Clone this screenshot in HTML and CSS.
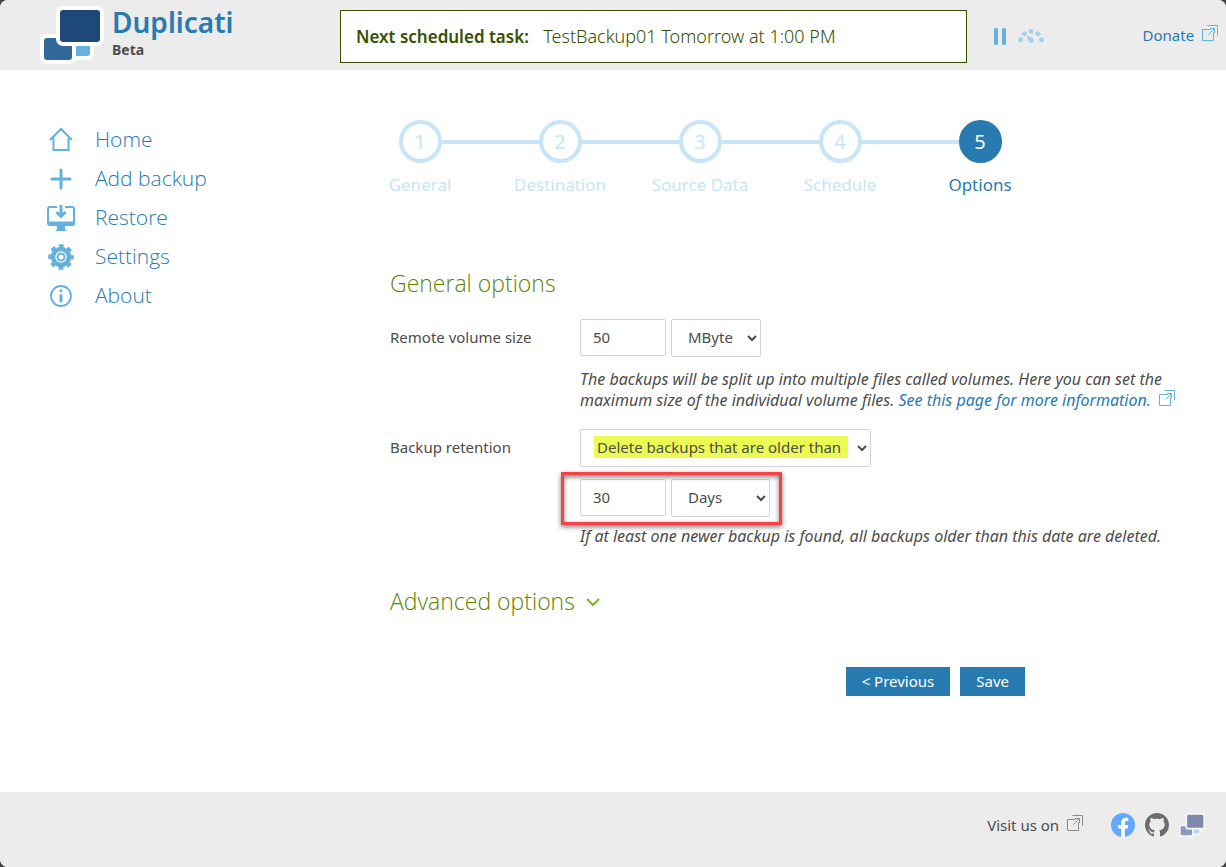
FILE: index.html
```html
<!DOCTYPE html>
<html lang="en">
<head>
    <meta charset="UTF-8">
    <meta name="viewport" content="width=device-width, initial-scale=1.0">
    <title>Duplicati</title>
    <link rel="stylesheet" href="styles.css">
</head>
<body>
    <svg class="symbols" width="0" height="0" aria-hidden="true">
        <symbol id="logo" viewBox="0 0 64 58">
            <rect x="30" y="32" width="22" height="20" rx="5" fill="#65b1de" stroke="#fff" stroke-width="4"/>
            <rect x="2" y="30" width="32" height="26" rx="5" fill="#33689b" stroke="#fff" stroke-width="4"/>
            <rect x="18" y="2" width="44" height="36" rx="5" fill="#1e4878" stroke="#fff" stroke-width="4"/>
        </symbol>
        <symbol id="external" viewBox="0 0 16 16">
            <path d="M8.5 4.5h-8v11h11v-8M5.5 .5h10v10M6.500 9.500l6-6M8 3.500h4.500V8" fill="none" stroke="currentColor"/>
        </symbol>
    </svg>

    <header class="header">
        <a href="#" class="brand">
            <svg class="logo"><use href="#logo"/></svg>
            <span class="brand-text">
                <span class="brand-name">Duplicati</span>
                <span class="brand-tag">Beta</span>
            </span>
        </a>
        <div class="task"><strong>Next scheduled task:</strong> <span>TestBackup01 Tomorrow at 1:00 PM</span></div>
        <div class="header-right">
            <button class="icon-button" aria-label="Pause">
                <svg width="12" height="18" viewBox="0 0 12 18" fill="#65b1de"><rect y="1" width="4" height="17" rx="1.500"/><rect x="8" y="1" width="4" height="17" rx="1.500"/></svg>
            </button>
            <button class="icon-button" aria-label="Throttle">
                <svg width="26" height="16" viewBox="0 0 26 16">
                    <path d="M2.300 14A10.700 10.700 0 0 1 23.700 14" fill="none" stroke="#a5cee8" stroke-width="4" stroke-dasharray="4.500 2.780"/>
                    <path d="M8.500 7.500l6 2.500a2.700 2.700 0 1 1-4 3.200z" fill="#a5cee8"/>
                </svg>
            </button>
            <a href="#" class="donate">Donate <svg class="external"><use href="#external"/></svg></a>
        </div>
    </header>

    <div class="container">
        <nav class="menu">
            <a href="#">
                <svg viewBox="0 0 28 28"><path d="M3 14L14 3l11 11M6.500 12v12h15V12" fill="none" stroke="#65b1de" stroke-width="2"/></svg>
                Home
            </a>
            <a href="#">
                <svg viewBox="0 0 28 28"><path d="M14 5v18M5 14h18" stroke="#65b1de" stroke-width="3" stroke-linecap="round"/></svg>
                Add backup
            </a>
            <a href="#">
                <svg viewBox="0 0 28 28">
                    <path d="M10 3H3q-2 0-2 2v14q0 2 2 2h22q2 0 2-2V5q0-2-2-2h-7" fill="none" stroke="#65b1de" stroke-width="2"/>
                    <path d="M1 17.500h26V20q0 2-2 2H3q-2 0-2-2zM10 22h8v3l2 2H8l2-2z" fill="#65b1de"/>
                    <path d="M14 1v10M9.500 8l4.500 4.500L18.500 8" fill="none" stroke="#65b1de" stroke-width="3"/>
                </svg>
                Restore
            </a>
            <a href="#">
                <svg viewBox="0 0 28 28">
                    <circle cx="14" cy="14" r="8" fill="none" stroke="#65b1de" stroke-width="4.500"/>
                    <circle cx="14" cy="14" r="11" fill="none" stroke="#65b1de" stroke-width="3.500" stroke-dasharray="4.640 4" stroke-dashoffset="2.320"/>
                    <circle cx="14" cy="14" r="3.500" fill="none" stroke="#65b1de" stroke-width="2"/>
                </svg>
                Settings
            </a>
            <a href="#">
                <svg viewBox="0 0 28 28">
                    <circle cx="14" cy="14" r="10" fill="none" stroke="#65b1de" stroke-width="1.800"/>
                    <circle cx="14" cy="8.800" r="1.600" fill="#65b1de"/>
                    <path d="M14 13.500v5.500" stroke="#65b1de" stroke-width="3" stroke-linecap="round"/>
                </svg>
                About
            </a>
        </nav>

        <main class="content">
            <ol class="steps">
                <li><span class="step-row"><span class="step-circle">1</span></span>General</li>
                <li><span class="step-row"><span class="step-circle">2</span></span>Destination</li>
                <li><span class="step-row"><span class="step-circle">3</span></span>Source Data</li>
                <li><span class="step-row"><span class="step-circle">4</span></span>Schedule</li>
                <li class="active"><span class="step-row"><span class="step-circle">5</span></span>Options</li>
            </ol>

            <form class="options">
                <h2>General options</h2>

                <div class="form-row">
                    <label for="volumeSize">Remote volume size</label>
                    <div>
                        <div class="fields">
                            <input type="number" id="volumeSize" value="50">
                            <select class="unit" aria-label="Volume size unit">
                                <option>MByte</option>
                            </select>
                        </div>
                        <p class="hint">The backups will be split up into multiple files called volumes. Here you can set the maximum size of the individual volume files. <a href="#">See this page for more information. <svg class="external"><use href="#external"/></svg></a></p>
                    </div>
                </div>

                <div class="form-row">
                    <label for="retention">Backup retention</label>
                    <div>
                        <select id="retention" class="retention">
                            <option>Delete backups that are older than</option>
                        </select>
                        <div class="fields marked">
                            <input type="number" value="30" aria-label="Retention time">
                            <select class="period" aria-label="Retention unit">
                                <option>Days</option>
                            </select>
                        </div>
                        <p class="hint">If at least one newer backup is found, all backups older than this date are deleted.</p>
                    </div>
                </div>

                <h2 class="advanced">Advanced options
                    <svg width="16" height="10" viewBox="0 0 16 10"><path d="M2 2l6 6 6-6" fill="none" stroke="#7ab827" stroke-width="2.200"/></svg>
                </h2>

                <div class="buttons">
                    <button type="button">&lt; Previous</button>
                    <button type="submit">Save</button>
                </div>
            </form>
        </main>
    </div>

    <footer class="footer">
        <span class="visit">Visit us on <svg class="external"><use href="#external"/></svg></span>
        <a href="#" aria-label="Facebook">
            <svg width="24" height="24" viewBox="0 0 24 24">
                <circle cx="12" cy="12" r="12" fill="#62a8fb"/>
                <path d="M10.200 24v-8.500H7.200V12h3V9.400c0-3 1.800-4.700 4.500-4.700 1.300 0 2.600.2 2.600.2v3h-1.500c-1.500 0-1.900.9-1.900 1.800V12h3.300l-.5 3.500h-2.800V24z" fill="#fff"/>
            </svg>
        </a>
        <a href="#" aria-label="GitHub">
            <svg width="24" height="24" viewBox="0 0 16 16" fill="#6f6b6e">
                <path d="M8 0C3.580 0 0 3.580 0 8c0 3.540 2.290 6.530 5.470 7.590.4.070.55-.17.55-.38 0-.19-.01-.82-.01-1.490-2.010.37-2.530-.49-2.690-.94-.09-.23-.48-.94-.82-1.130-.28-.15-.68-.52-.01-.53.63-.01 1.080.58 1.230.82.72 1.210 1.870.87 2.330.66.07-.52.28-.87.51-1.070-1.780-.2-3.640-.89-3.640-3.950 0-.87.31-1.590.82-2.150-.08-.2-.36-1.020.08-2.120 0 0 .67-.21 2.200.82.64-.18 1.320-.27 2-.27s1.360.09 2 .27c1.530-1.040 2.200-.82 2.200-.82.44 1.100.16 1.920.08 2.120.51.56.82 1.270.82 2.150 0 3.070-1.870 3.750-3.650 3.950.29.25.54.73.54 1.480 0 1.070-.01 1.930-.01 2.200 0 .21.15.46.55.38A8.010 8.010 0 0 0 16 8c0-4.420-3.580-8-8-8z"/>
            </svg>
        </a>
        <a href="#" aria-label="Duplicati">
            <svg width="26" height="24" viewBox="0 0 64 58" opacity=".6">
                <rect x="30" y="32" width="22" height="20" rx="5" fill="#8cc8e8" stroke="#fff" stroke-width="4"/>
                <rect x="2" y="30" width="32" height="26" rx="5" fill="#4a62a0" stroke="#fff" stroke-width="4"/>
                <rect x="18" y="2" width="44" height="36" rx="5" fill="#384880" stroke="#fff" stroke-width="4"/>
            </svg>
        </a>
    </footer>
</body>
</html>
```
FILE: styles.css
```css
* {
    box-sizing: border-box;
}

html {
    background-color: #45433f;
}

body {
    display: flex;
    flex-direction: column;
    min-height: 100vh;
    margin: 0;
    font-family: "Noto Sans", sans-serif;
    font-size: 15px;
    line-height: 21px;
    color: #4c4c4c;
    background-color: #fff;
    border-radius: 8px;
    overflow: hidden;
}

a {
    color: #277bb1;
    text-decoration: none;
}

.symbols {
    position: absolute;
}

.external {
    width: 16px;
    height: 16px;
    margin-left: 4px;
    color: #65b1de;
}

/* header */
.header {
    display: flex;
    align-items: center;
    height: 70px;
    padding-left: 40px;
    background-color: #ececec;
}

.brand {
    display: flex;
    gap: 8px;
    width: 300px;
}

.logo {
    width: 64px;
    height: 58px;
}

.brand-text {
    display: flex;
    flex-direction: column;
}

.brand-name {
    font-size: 28px;
    font-weight: 600;
    line-height: 32px;
}

.brand-tag {
    font-size: 14px;
    font-weight: bold;
    line-height: 24px;
    color: #4c4c4c;
}

.task {
    flex: 1;
    margin-top: 3px;
    padding: 15px;
    font-size: 17px;
    border: 1px solid #365000;
    color: #365000;
    background-color: #fff;
}

.task strong {
    font-weight: 600;
}

.task span {
    margin-left: 10px;
    font-size: 18px;
    font-weight: 300;
}

.header-right {
    display: flex;
    align-items: center;
    gap: 12px;
    width: 259px;
    padding: 0 8px 0 27px;
}

.icon-button {
    display: flex;
    padding: 2px 0 0;
    border: none;
    background: none;
    cursor: pointer;
}

.donate {
    margin-left: auto;
}

/* menu and page */
.container {
    display: flex;
    flex: 1;
}

.menu {
    display: flex;
    flex-direction: column;
    flex-shrink: 0;
    width: 350px;
    padding: 50px 0 0 47px;
}

.menu a {
    display: flex;
    align-items: center;
    gap: 20px;
    height: 39px;
    font-family: "Open Sans", sans-serif;
    font-size: 21px;
    font-weight: 300;
}

.menu svg {
    width: 28px;
    height: 28px;
}

.content {
    flex: 1;
    padding: 50px 40px 40px 0;
}

.steps {
    display: flex;
    max-width: 700px;
    margin: 0;
    padding: 0;
    list-style: none;
    font-size: 17px;
    text-align: center;
    color: #c7e5f6;
}

.steps li {
    flex: 1;
}

.step-row {
    display: flex;
    align-items: center;
    margin-bottom: 11px;
}

.step-row::before,
.step-row::after {
    content: "";
    flex: 1;
    height: 4px;
    background-color: #c7e5f6;
}

.steps li:first-child .step-row::before,
.steps li:last-child .step-row::after {
    background: none;
}

.step-circle {
    width: 43px;
    height: 43px;
    border: 4px solid #c7e5f6;
    border-radius: 50%;
    font-size: 20px;
    line-height: 35px;
}

.steps .active {
    color: #277bb1;
}

.active .step-circle {
    color: #fff;
    border-color: #277bb1;
    background-color: #277bb1;
}

/* form */
.options {
    padding: 72px 0 0 40px;
}

h2 {
    margin: 0 0 20px;
    font-family: "Open Sans", sans-serif;
    font-size: 23px;
    font-weight: 300;
    line-height: 32px;
    color: #5c8500;
}

.form-row {
    display: grid;
    grid-template-columns: 190px 1fr;
    margin-bottom: 18px;
}

.form-row label {
    line-height: 37px;
}

.fields {
    display: flex;
    gap: 5px;
}

input,
select {
    padding: 0 12px;
    font: inherit;
    border: 1px solid #d4d4d4;
    border-radius: 2px;
    color: #4c4c4c;
    background-color: #fff;
}

input {
    width: 86px;
    height: 37px;
    padding-bottom: 2px;
}

select {
    height: 38px;
    padding: 0 0 2px 12px;
}

.unit {
    width: 90px;
}

.period {
    width: 99px;
}

.retention {
    display: block;
    width: 291px;
    background-image: linear-gradient(#ebfb52, #ebfb52);
    background-repeat: no-repeat;
    background-position: 13px 6px;
    background-size: 254px 22px;
}

.marked {
    position: relative;
    width: max-content;
    margin-top: 12px;
}

/* red frame around the retention time */
.marked::after {
    content: "";
    position: absolute;
    inset: -7px -12px -8px -19px;
    border: 3px solid #fb4045;
    box-shadow: 0 2px 5px rgba(0, 0, 0, 0.5), inset 0 2px 5px rgba(0, 0, 0, 0.5);
    pointer-events: none;
}

.hint {
    margin: 12px 0 0;
    font-size: 16px;
    font-style: italic;
}

.marked + .hint {
    margin-top: 9px;
}

.advanced {
    margin: 38px 0 50px;
}

.advanced svg {
    margin: 0 0 3px 4px;
}

.buttons {
    display: flex;
    justify-content: flex-end;
    gap: 10px;
    max-width: 635px;
}

.buttons button {
    height: 29px;
    padding: 0 16px;
    font: inherit;
    border: none;
    color: #fff;
    background-color: #277bb1;
    cursor: pointer;
}

/* footer */
.footer {
    display: flex;
    align-items: center;
    justify-content: flex-end;
    gap: 10px;
    height: 75px;
    padding: 0 21px 9px 0;
    background-color: #ececec;
}

.footer a {
    display: flex;
}

.visit {
    margin-right: 18px;
}

.visit .external {
    color: #8a8a8a;
}
```
